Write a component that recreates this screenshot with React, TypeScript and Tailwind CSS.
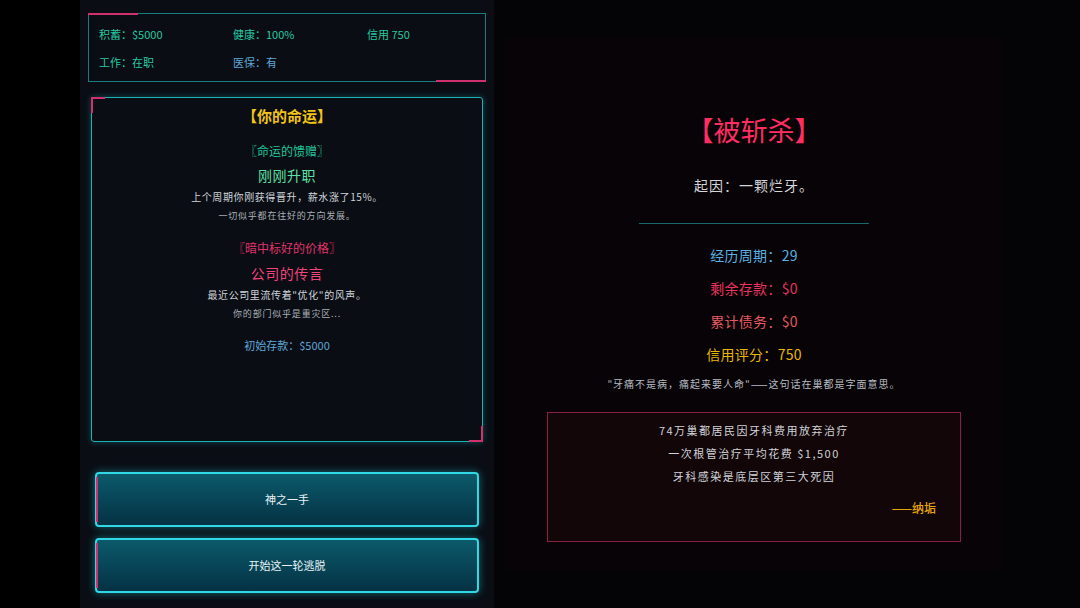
import React from "react";

const font = { fontFamily: '"Noto Sans CJK SC", "Noto Sans", sans-serif' };

function StatsBox() {
	return (
		<div className="relative mx-2 mt-[13px] h-[69px] border border-[#1b7c80] px-[10px] pt-[12px]">
			<span className="absolute -top-px left-[-1px] h-[2px] w-[50px] bg-[#d0306e]" />
			<span className="absolute -bottom-px right-[-1px] h-[2px] w-[50px] bg-[#d0306e]" />
			<div className="grid grid-cols-[134px_134px_1fr] gap-y-[11px] text-[11px] leading-[17px]">
				<span className="text-[#27c9a0]">积蓄：$5000</span>
				<span className="text-[#27c9a0]">健康：100%</span>
				<span className="text-[#27c9a0]">信用 750</span>
				<span className="text-[#27c9a0]">工作：在职</span>
				<span className="text-[#5ea6d6]">医保：有</span>
			</div>
		</div>
	);
}

function FateBox() {
	return (
		<div className="relative mx-[11px] mt-[15px] flex h-[345px] flex-col items-center rounded-[3px] border border-[#1ab0b4] pt-[6px] text-center shadow-[0_0_6px_rgba(34,200,210,0.35)]">
			<span className="absolute -left-px -top-px h-[16px] w-[2px] bg-[#d0306e]" />
			<span className="absolute -left-px -top-px h-[2px] w-[14px] bg-[#d0306e]" />
			<span className="absolute -bottom-px -right-px h-[16px] w-[2px] bg-[#d0306e]" />
			<span className="absolute -bottom-px -right-px h-[2px] w-[14px] bg-[#d0306e]" />
			<div className="text-[15px] font-bold leading-[24px] text-[#f2c318]">【你的命运】</div>
			<div className="mt-[14px] text-[12px] leading-[18px] text-[#20c59a]">〖命运的馈赠〗</div>
			<div className="mt-[5px] text-[14px] leading-[20px] tracking-[0.5px] text-[#5ee0a4]">刚刚升职</div>
			<div className="mt-[4px] text-[10px] leading-[16px] tracking-[0.6px] text-[#cfd4da]">上个周期你刚获得晋升，薪水涨了15%。</div>
			<div className="mt-[3px] text-[9px] leading-[16px] tracking-[0.8px] text-[#a9afb6]">一切似乎都在往好的方向发展。</div>
			<div className="mt-[15px] text-[12px] leading-[18px] text-[#e0336c]">〖暗中标好的价格〗</div>
			<div className="mt-[6px] text-[14px] leading-[20px] tracking-[0.5px] text-[#f0447a]">公司的传言</div>
			<div className="mt-[4px] text-[10px] leading-[16px] tracking-[0.6px] text-[#cfd4da]">最近公司里流传着"优化"的风声。</div>
			<div className="mt-[3px] text-[9px] leading-[16px] tracking-[0.8px] text-[#a9afb6]">你的部门似乎是重灾区...</div>
			<div className="mt-[14px] text-[11px] leading-[18px] text-[#5ea6d6]">初始存款：$5000</div>
		</div>
	);
}

function NeonButton({ label }: { label: string }) {
	return (
		<button className="relative flex h-[55px] w-full items-center justify-center rounded-[4px] border-2 border-[#2fd8e4] bg-gradient-to-b from-[#0b5a6b] to-[#053244] text-[11px] text-[#e8f4f6] shadow-[0_0_8px_rgba(40,220,235,0.45)]">
			<span className="absolute bottom-[3px] left-[-1px] top-[3px] w-[2px] bg-[#d0306e]" />
			{label}
		</button>
	);
}

export default function App() {
	const stats = [
		{ text: "经历周期：29", color: "text-[#5ab2e2]" },
		{ text: "剩余存款：$0", color: "text-[#ea325f]" },
		{ text: "累计债务：$0", color: "text-[#e65a5e]" },
		{ text: "信用评分：750", color: "text-[#e8b800]" },
	];

	return (
		<div className="flex h-[608px] w-[1080px] overflow-hidden bg-black" style={font}>
			<div className="w-[80px] shrink-0 bg-black" />

			<div className="flex w-[414px] shrink-0 flex-col bg-[#0a0d14]">
				<StatsBox />
				<FateBox />
				<div className="mt-[30px] flex flex-col gap-[11px] px-[15px]">
					<NeonButton label="神之一手" />
					<NeonButton label="开始这一轮逃脱" />
				</div>
			</div>

			<div className="flex flex-1 bg-[#040305] pl-[11px] pt-[38px]">
				<div className="flex h-[532px] w-[498px] flex-col items-center bg-[#070306] text-center">
					<div className="mt-[73px] text-[27px] leading-[38px] text-[#ff2d62]">【被斩杀】</div>
					<div className="mt-[26px] text-[14px] leading-[20px] tracking-[1px] text-[#d2d4d8]">起因：一颗烂牙。</div>
					<div className="mt-[28px] h-px w-[230px] bg-[#17676c]" />
					<div className="mt-[21px] flex flex-col gap-[12px]">
						{stats.map((s) => (
							<div key={s.text} className={`text-[14px] leading-[21px] tracking-[0.3px] ${s.color}`}>
								{s.text}
							</div>
						))}
					</div>
					<div className="mt-[11px] text-[10px] leading-[16px] tracking-[1px] text-[#b8bcc2]">
						"牙痛不是病，痛起来要人命"——这句话在巢都是字面意思。
					</div>
					<div className="mt-[20px] flex h-[130px] w-[414px] flex-col border border-[#8a1f45] bg-[#120609] px-[24px] pt-[6px] text-[11px] leading-[23px] tracking-[1.5px] text-[#cfd2d6]">
						<div>74万巢都居民因牙科费用放弃治疗</div>
						<div>一次根管治疗平均花费 $1,500</div>
						<div>牙科感染是底层区第三大死因</div>
						<div className="mt-[8px] text-right text-[12px] font-medium tracking-normal text-[#e6a60a]">——纳垢</div>
					</div>
				</div>
			</div>
		</div>
	);
}
